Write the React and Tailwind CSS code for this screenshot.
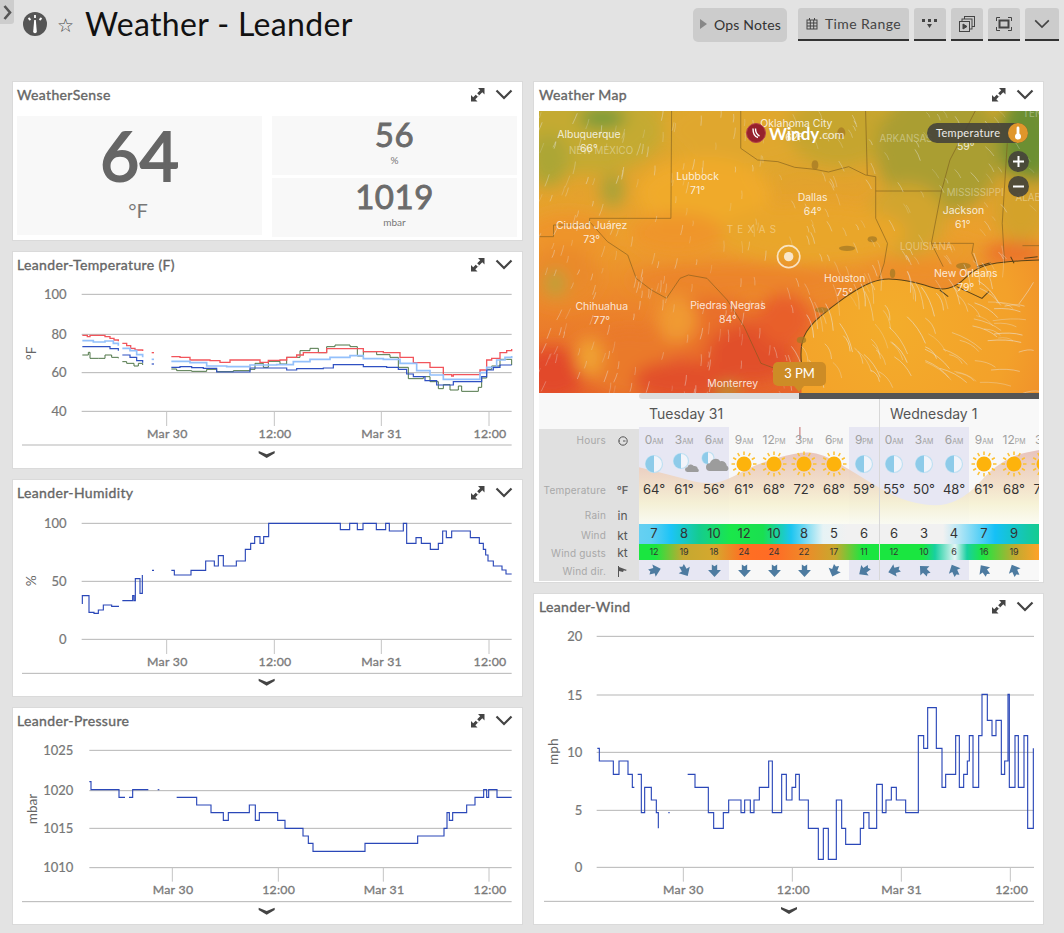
import React from "react";

const parse = (s, dx = 0) => {
  const n = s.trim().split(/[\s,]+/).map(Number);
  const out = [];
  for (let i = 0; i < n.length; i += 2) out.push([n[i] + dx, n[i + 1]]);
  return out;
};

// step line: go across to x, then up or down to y
const stepPath = (pts) => {
  let d = `M${pts[0][0]} ${pts[0][1]}`;
  for (const [x, y] of pts.slice(1)) d += `H${x}V${y}`;
  return d;
};

const smoothPath = (pts) => {
  let d = `M${pts[0][0]} ${pts[0][1]}`;
  for (let i = 1; i < pts.length - 1; i++) {
    const mx = (pts[i][0] + pts[i + 1][0]) / 2;
    const my = (pts[i][1] + pts[i + 1][1]) / 2;
    d += `Q${pts[i][0]} ${pts[i][1]} ${mx} ${my}`;
  }
  const last = pts[pts.length - 1];
  return d + `L${last[0]} ${last[1]}`;
};

const BLUE = "#2a47b8";

const charts = {
  temp: {
    vb: "9 0 1527 564",
    left: 215, right: 1505, grid: [43, 163, 278, 394],
    yLabels: ["100", "80", "60", "40"], labelEnd: 170,
    ticks: [470, 793, 1114, 1437], tickBottom: 438, tickText: [472, 795, 1115, 1440], tickY: 474,
    bottom: 495, chevron: 522, chevX: 770, axisLeft: 36, unit: "°F", unitX: 78, unitY: 220,
    series: [
      { c: "#4f7547", w: 3, parts: ["217 225 235 217 240 235 265 235 285 225 305 232 325 235", "337 245 350 250 372 258 385 250 398 255", "484 267 500 272 545 274 590 268 620 275 670 272 720 268 735 250 760 262 775 244 810 252 830 232 870 212 900 205 925 218 950 200 975 195 1020 200 1042 228 1060 215 1100 224 1140 232 1165 262 1185 262 1195 296 1240 290 1260 305 1285 326 1300 314 1320 330 1345 318 1355 334 1405 322 1415 294 1430 268 1445 258 1470 238 1490 238 1505 255"] },
      { c: "#f2555c", w: 4, parts: ["217 166 232 170 240 166 285 170 300 175 312 180 325 184", "337 190 350 197 362 205 375 210 398 213", "425 218 432 218", "484 230 510 232 540 240 600 242 630 247 660 240 720 240 750 247 775 241 810 240 830 232 860 225 880 218 925 218 950 206 1040 206 1060 215 1120 218 1170 232 1210 248 1260 262 1300 284 1325 288 1330 284 1395 284 1410 270 1430 240 1445 235 1470 218 1490 212 1505 207"] },
      { c: "#93c0fb", w: 5, parts: ["217 182 250 186 285 183 310 190 325 197", "337 205 360 212 380 224 398 232", "425 238 432 238", "484 244 540 248 590 258 650 260 720 255 800 254 850 245 900 238 960 232 1020 227 1060 236 1120 238 1170 250 1220 272 1260 285 1300 298 1380 298 1410 278 1430 262 1460 240 1485 232 1505 228"] },
      { c: "#2f50c2", w: 3.6, parts: ["217 200 270 200 300 206 325 212", "337 225 360 232 380 242 398 248", "425 252 432 252", "484 262 510 260 545 263 580 265 620 276 680 276 720 264 790 264 830 270 860 266 940 264 970 254 1030 254 1060 260 1130 262 1165 268 1190 282 1210 290 1245 302 1280 315 1330 305 1400 305 1415 290 1430 270 1450 262 1470 255 1505 255"] },
    ],
  },
  humidity: {
    vb: "9 84 1527 564",
    left: 215, right: 1505, grid: [130, 304, 478],
    yLabels: ["100", "50", "0"], labelEnd: 170,
    ticks: [470, 793, 1114, 1437], tickBottom: 522, tickText: [472, 795, 1115, 1440], tickY: 557,
    bottom: 580, chevron: 605, chevX: 770, axisLeft: 36, unit: "%", unitX: 78, unitY: 302,
    series: [
      { c: BLUE, w: 3.4, parts: ["217 372 217 347 237 397 252 400 265 390 280 375 305 379 327 379", "337 362 368 347 372 362 376 296 390 340 397 285", "426 271 432 271", "484 271 493 285 543 271 587 243 613 258 625 227 640 258 679 243 706 208 722 190 734 170 750 190 761 170 776 130 991 149 1019 130 1042 149 1059 130 1099 149 1127 130 1138 153 1180 130 1190 190 1218 173 1234 190 1261 208 1285 190 1298 153 1309 173 1325 153 1381 173 1408 190 1420 208 1427 225 1434 243 1450 258 1476 270 1488 282 1505 282"] },
    ],
  },
  pressure: {
    vb: "9 93 1527 564",
    left: 238, right: 1505, grid: [136, 257, 370, 488],
    yLabels: ["1025", "1020", "1015", "1010"], labelEnd: 190,
    ticks: [487, 805, 1120, 1437], tickBottom: 530, tickText: [489, 806, 1122, 1440], tickY: 567,
    bottom: 590, chevron: 617, chevX: 770, axisLeft: 36, unit: "mbar", unitX: 80, unitY: 312,
    series: [
      { c: BLUE, w: 3.4, parts: ["238 230 243 254 327 277 345 277", "357 277 368 254 415 254", "443 254 448 254", "500 277 560 300 603 323 640 346 655 323 718 300 736 346 748 323 803 346 825 370 879 393 895 415 909 439 1065 415 1223 393 1302 370 1311 323 1318 346 1328 323 1370 300 1395 277 1421 254 1430 277 1436 254 1461 277 1505 277"] },
    ],
  },
  wind: {
    vb: "12 81 1530 906",
    left: 200, right: 1512, grid: [124, 300, 472, 646, 817],
    yLabels: ["20", "15", "10", "5", "0"], labelEnd: 157,
    ticks: [460, 787, 1114, 1441], tickBottom: 860, tickText: [460, 790, 1115, 1445], tickY: 897,
    bottom: 919, chevron: 945, chevX: 777, axisLeft: 42, unit: "mph", unitX: 84, unitY: 470,
    series: [
      { c: BLUE, w: 3.4, parts: [
        "202 460 208 498 250 538 267 498 294 538 307 577 313 577",
        "323 538 334 653 344 577 364 615 379 653 385 700",
        "415 653 419 653",
        "473 538 495 577 535 653 551 700 580 653 596 615 633 653 644 615 661 653 672 615 688 577 716 498 727 653 755 538 769 615 786 577 797 538 808 615 835 700 865 793 880 700 895 793 919 615 935 700 947 748 991 700 1001 653 1017 700 1040 568 1057 653 1068 615 1084 577 1099 615 1127 653 1165 422 1181 460 1193 338 1219 460 1236 577 1247 538 1277 422 1288 577 1301 538 1312 498 1318 422 1329 577 1346 422 1356 298 1372 376 1386 422 1398 376 1414 538 1424 498 1434 298 1438 577 1455 422 1465 577 1482 422 1493 700 1510 460",
      ] },
    ],
  },
};

const Chevron = ({ w = 18, h = 11, sw = 2.2, c = "#444" }) => (
  <svg width={w} height={h} viewBox="0 0 18 11" fill="none">
    <path d="M1.5 1.5 9 9l7.5-7.5" stroke={c} strokeWidth={sw} />
  </svg>
);

const ExpandIcon = () => (
  <svg width="15" height="15" viewBox="0 0 15 15" fill="#444">
    <path d="M8 1h6.5v6.5l-2.2-2.2L5.3 12.3l2.2 2.2H1V8l2.2 2.2 7-7z" />
    <path d="M6 6.5 8.500 9" stroke="#fff" strokeWidth="2" />
  </svg>
);

const Panel = ({ title, h, pad = "pl-[4px]", children }) => (
  <div className={`bg-white border border-[#dadada] w-[511px] flex flex-col ${h}`}>
    <div className={`h-[28px] shrink-0 flex items-center justify-between pb-[3px] pr-[9px] ${pad}`}>
      <span className="text-[14px] text-[#666] tracking-[0.35px] [-webkit-text-stroke:0.35px_#666]">{title}</span>
      <div className="flex items-center gap-[10px]">
        <ExpandIcon />
        <Chevron />
      </div>
    </div>
    {children}
  </div>
);

const Chart = ({ cfg }) => {
  const [, , vw, vh] = cfg.vb.split(" ").map(Number);
  return (
    <svg viewBox={cfg.vb} width={vw / 3} height={vh / 3} className="block" fontFamily="Lato, sans-serif">
      {cfg.grid.map((y, i) => (
        <g key={y}>
          <line x1={cfg.left} x2={cfg.right} y1={y} y2={y} stroke="#b5b5b5" strokeWidth="3" />
          <text x={cfg.labelEnd} y={y + 14} textAnchor="end" fontSize="39" fill="#777" stroke="#777" strokeWidth="0.6">{cfg.yLabels[i]}</text>
        </g>
      ))}
      {cfg.ticks.map((x, i) => (
        <g key={x}>
          <line x1={x} x2={x} y1={cfg.grid[cfg.grid.length - 1]} y2={cfg.tickBottom} stroke="#c4c4c4" strokeWidth="3" />
          <text x={cfg.tickText[i]} y={cfg.tickY} textAnchor="middle" fontSize="37" fill="#7a7a7a" stroke="#7a7a7a" strokeWidth="1" letterSpacing="0.8">
            {i % 2 === 0 ? (i === 0 ? "Mar 30" : "Mar 31") : "12:00"}
          </text>
        </g>
      ))}
      <text transform={`translate(${cfg.unitX} ${cfg.unitY}) rotate(-90)`} textAnchor="middle" fontSize="41" fill="#666">{cfg.unit}</text>
      {cfg.series.map((s) =>
        s.parts.map((p, i) => <path key={s.c + i} d={stepPath(parse(p))} fill="none" stroke={s.c} strokeWidth={s.w} />)
      )}
      <line x1={cfg.axisLeft} x2={cfg.right} y1={cfg.bottom} y2={cfg.bottom} stroke="#b5b5b5" strokeWidth="3" />
      <path d={`M${cfg.chevX - 24} ${cfg.chevron - 9}l24 10 24-10v7l-24 14-24-14z`} fill="#444" />
    </svg>
  );
};

// ---- map ----
const coast = parse("790 760 785 710 810 650 880 590 950 540 1010 510 1060 505 1140 520 1200 540 1250 530 1310 470 1390 455 1494 450");
const coastY = (x) => {
  for (let i = 0; i < coast.length - 1; i++) {
    const [x1, y1] = coast[i];
    const [x2, y2] = coast[i + 1];
    if (x >= Math.min(x1, x2) && x <= Math.max(x1, x2)) return y1 + ((x - x1) / (x2 - x1 || 1)) * (y2 - y1);
  }
  return 2000;
};

let seed = 7;
const rnd = () => {
  seed = (seed * 16807) % 2147483647;
  return seed / 2147483647;
};

const streaks = [];
for (let i = 0; i < 380; i++) {
  const x = 12 + rnd() * 1482;
  const y = 3 + rnd() * 846;
  const sea = x > 790 && y > coastY(x) + 8;
  let a, len;
  if (sea) {
    a = Math.atan2(y - 500, x - 1450) + Math.PI / 2;
    len = 40 + rnd() * 60;
  } else {
    a = ((90 + (300 - x) * 0.03 + (x > 700 ? -6 : 12) + rnd() * 14 - 7) * Math.PI) / 180;
    len = 14 + rnd() * 22;
  }
  const dx = Math.cos(a) * len;
  const dy = Math.sin(a) * len;
  const bend = sea ? 8 : 2;
  streaks.push({
    d: `M${x.toFixed(0)} ${y.toFixed(0)}q${(dx / 2 + bend).toFixed(0)} ${(dy / 2 - bend).toFixed(0)} ${dx.toFixed(0)} ${dy.toFixed(0)}`,
    o: sea ? 0.3 + rnd() * 0.35 : 0.2 + rnd() * 0.3,
  });
}

const blobs = [
  [150, 60, 230, 130, "#c4aa33"], [200, 24, 70, 30, "#6f9a3a"], [230, 240, 35, 50, "#a8a338"], [40, 150, 60, 80, "#aca636"],
  [620, 60, 240, 120, "#e0a72d"], [900, 60, 150, 110, "#c6a52e"], [1200, 120, 190, 190, "#aa9e30"], [1460, 90, 80, 150, "#6c8f31"],
  [1100, 330, 120, 110, "#d2a52d"], [1440, 300, 80, 100, "#d4a22c"], [500, 250, 200, 110, "#f0aa2c"],
  [820, 370, 280, 90, "#e9a62c"], [100, 380, 130, 70, "#ee942c"], [420, 370, 140, 60, "#ef952c"],
  [600, 510, 320, 45, "#ec842a"], [80, 500, 110, 90, "#ea8a2c"], [60, 520, 30, 40, "#b9a23a"],
  [520, 660, 170, 100, "#e96f2a"], [420, 630, 60, 70, "#f09a30"], [640, 730, 130, 90, "#e14f29"], [50, 790, 100, 80, "#e2482a"],
  [280, 760, 130, 100, "#ea7a2b"], [160, 740, 40, 60, "#f0a232"], [440, 810, 150, 60, "#e2502a"], [570, 845, 30, 20, "#a0a838"],
  [740, 630, 80, 80, "#e85e2a"], [1240, 420, 80, 30, "#ea9c2c"], [1420, 430, 90, 35, "#ec722a"], [1130, 480, 160, 25, "#ee8e2b"],
];

const places = [
  ["Albuquerque", 160, 72], ["66°", 160, 114], ["Lubbock", 482, 198], ["71°", 482, 240], ["Dallas", 823, 262], ["64°", 823, 303],
  ["Ciudad Juárez", 168, 345], ["73°", 168, 387], ["Chihuahua", 198, 588], ["77°", 198, 630], ["Piedras Negras", 572, 586], ["84°", 572, 627],
  ["Houston", 918, 505], ["75°", 918, 546], ["New Orleans", 1277, 489], ["79°", 1277, 531], ["Jackson", 1270, 300], ["61°", 1268, 342],
  ["Oklahoma City", 775, 40], ["62°", 768, 82], ["Monterrey", 586, 820], ["59°", 1277, 108],
];
const regions = [
  ["NEW MEXICO", 196, 122, 0], ["MISSISSIPPI", 1305, 248, 0], ["LOUISIANA", 1160, 410, 0], ["ARKANSAS", 1100, 86, 0], ["ALAB", 1462, 262, 0], ["TEN", 1475, 12, 0], ["TEXAS", 648, 360, 13],
];

const WeatherMap = () => (
  <div className="relative w-[500px] h-[282px] overflow-hidden">
    <svg viewBox="12 3 1482 846" preserveAspectRatio="none" width="500" height="282" className="block" fontFamily="Inter, sans-serif">
      <defs>
        <filter id="soft" x="-20%" y="-20%" width="140%" height="140%"><feGaussianBlur stdDeviation="24" /></filter>
        <clipPath id="frame"><rect x="12" y="3" width="1482" height="846" /></clipPath>
        <linearGradient id="land" x1="0" y1="0" x2="0" y2="1">
          <stop offset="0" stopColor="#d6a82d" />
          <stop offset="0.45" stopColor="#ec9f2d" />
          <stop offset="0.7" stopColor="#ec842b" />
          <stop offset="1" stopColor="#e6642a" />
        </linearGradient>
        <radialGradient id="gulf" gradientUnits="userSpaceOnUse" cx="1050" cy="640" r="520">
          <stop offset="0" stopColor="#f3ad2b" />
          <stop offset="0.7" stopColor="#f3a12a" />
          <stop offset="1" stopColor="#f08f2a" />
        </radialGradient>
      </defs>
      <g clipPath="url(#frame)">
        <rect x="12" y="3" width="1482" height="846" fill="url(#land)" />
        <g filter="url(#soft)">
          {blobs.map(([cx, cy, rx, ry, c], i) => <ellipse key={i} cx={cx} cy={cy} rx={rx} ry={ry} fill={c} />)}
        </g>
        <path d={`${smoothPath(coast)}L1494 849L790 849Z`} fill="url(#gulf)" />
        <g fill="none" stroke="#7a5a1e" strokeWidth="2.2" opacity="0.8">
          <path d="M405 3 403 325H162V345H55V380H12" />
          <path d="M610 3V115L660 150 720 155 770 172 830 178 870 186 930 170 980 195 1010 200V325L1045 400 1035 460 1020 505" />
          <path d="M980 3 985 195M1010 243H1205L1230 150 1305 3M1205 243 1175 400H1300L1295 430 1310 465M1400 100 1385 340 1392 460M1175 400 1210 470M1445 407H1494" />
          <path d="M162 335 215 395 275 435 300 505 345 540 390 565 430 505 455 495 510 505 570 570 620 650 670 760 710 775 770 790" />
        </g>
        <path d={smoothPath(coast)} fill="none" stroke="#5a4318" strokeWidth="3" />
        <path d="M1200 540 1225 560M1250 530 1325 565 1345 545M1310 470 1350 458M1410 440 1420 460M1450 445 1490 440" fill="none" stroke="#5a4318" strokeWidth="3" />
        <g fill="#a67a24" opacity="0.75">
          <ellipse cx="830" cy="165" rx="10" ry="14" /><ellipse cx="908" cy="68" rx="12" ry="16" /><ellipse cx="925" cy="415" rx="24" ry="8" />
          <ellipse cx="1000" cy="388" rx="14" ry="9" /><ellipse cx="1060" cy="490" rx="8" ry="14" /><ellipse cx="1270" cy="468" rx="22" ry="10" />
          <ellipse cx="790" cy="690" rx="14" ry="10" /><ellipse cx="850" cy="600" rx="20" ry="8" />
        </g>
        <g fill="none" stroke="#e8e8e8" strokeWidth="2.6" strokeLinecap="round">
          {streaks.map((s, i) => <path key={i} d={s.d} opacity={s.o} />)}
        </g>
        <circle cx="752" cy="440" r="33" fill="none" stroke="#fbeedb" strokeOpacity="0.85" strokeWidth="5" />
        <circle cx="752" cy="440" r="14" fill="#fbeedb" fillOpacity="0.9" />
        {regions.map(([t, x, y, sp]) => (
          <text key={t} x={x} y={y + 10} textAnchor="middle" fontSize="29" letterSpacing={sp} fill="#fff" fillOpacity="0.36">{t}</text>
        ))}
        {places.map(([t, x, y]) => (
          <text key={t + x} x={x} y={y + 11} textAnchor="middle" fontSize="31" fill="#fff" fillOpacity="0.82">{t}</text>
        ))}
      </g>
    </svg>
    <div className="absolute left-[207px] top-[12px] flex items-center gap-[3px]">
      <div className="w-[20px] h-[20px] rounded-full bg-[#96202c] border border-[#b5404a] flex items-center justify-center">
        <svg width="12" height="12" viewBox="0 0 12 12" fill="none" stroke="#fff" strokeWidth="1.4"><path d="M3 1.5c0 5 1 8 5 9M5.500 1.500c0 4 1 6 4 7.500" /></svg>
      </div>
      <span className="text-white text-[17px] font-bold leading-none">Windy</span>
      <span className="text-white/80 text-[12px] leading-none -ml-[3px] mt-[3px]">.com</span>
    </div>
    <div className="absolute left-[388px] top-[12px] w-[101px] h-[20px] rounded-full bg-[#45423a]/90 flex items-center justify-between pl-[9px]">
      <span className="text-white/90 text-[11px] tracking-[0.3px]">Temperature</span>
      <div className="w-[20px] h-[20px] rounded-full bg-[#e0962b] flex items-center justify-center">
        <svg width="8" height="14" viewBox="0 0 8 14" fill="#fff"><rect x="2.6" y="0.5" width="2.8" height="9" rx="1.4" /><circle cx="4" cy="10.5" r="3" /></svg>
      </div>
    </div>
    <div className="absolute left-[469px] top-[40px] w-[21px] h-[21px] rounded-full bg-[#45423a]/90 flex items-center justify-center">
      <svg width="11" height="11" viewBox="0 0 11 11" stroke="#fff" strokeWidth="2"><path d="M5.500 0v11M0 5.500h11" /></svg>
    </div>
    <div className="absolute left-[469px] top-[65px] w-[21px] h-[21px] rounded-full bg-[#45423a]/90 flex items-center justify-center">
      <svg width="11" height="11" viewBox="0 0 11 11" stroke="#fff" strokeWidth="2"><path d="M0 5.500h11" /></svg>
    </div>
    <div className="absolute left-[234px] top-[251px] w-[53px] h-[24px] rounded-[5px] bg-[#cd8c26] text-white text-[13px] flex items-center justify-center">3 PM</div>
    <div className="absolute left-[255px] top-[275px] w-0 h-0 border-x-[5px] border-x-transparent border-t-[6px] border-t-[#cd8c26]" />
  </div>
);

// ---- forecast ----
const hours = [["0", "AM"], ["3", "AM"], ["6", "AM"], ["9", "AM"], ["12", "PM"], ["3", "PM"], ["6", "PM"], ["9", "PM"], ["0", "AM"], ["3", "AM"], ["6", "AM"], ["9", "AM"], ["12", "PM"], ["3", "PM"]];
const icons = ["moon", "moonCloud", "cloud", "sun", "sun", "sun", "sun", "moon", "moon", "moon", "moon", "sun", "sun", "sun"];
const temps = [64, 61, 56, 61, 68, 72, 68, 59, 55, 50, 48, 61, 68, 72];
const winds = [7, 8, 10, 12, 10, 8, 5, 6, 6, 3, 4, 7, 9, ""];
const gusts = [12, 19, 18, 24, 24, 22, 17, 11, 12, 10, 6, 16, 19, ""];
const dirs = [75, 150, 180, 180, 180, 180, 200, 235, 255, 315, 335, 325, 335, 330];

const Sun = () => (
  <svg width="26" height="26" viewBox="0 0 26 26">
    {Array.from({ length: 12 }, (_, i) => (
      <line key={i} x1="13" y1="0.500" x2="13" y2="4" stroke="#fcc02e" strokeWidth="1.500" transform={`rotate(${i * 30} 13 13)`} />
    ))}
    <circle cx="13" cy="13" r="7.500" fill="#fdb30c" />
  </svg>
);

const Moon = ({ cx = 13, cy = 13, r = 8.500 }) => (
  <>
    <circle cx={cx} cy={cy} r={r} fill="#f2f4fa" stroke="#bfe0f2" strokeWidth="1.200" />
    <path d={`M${cx} ${cy - r}a${r} ${r} 0 0 0 0 ${r * 2}z`} fill="#8ecbe9" />
  </>
);

const Cloud = ({ x, y, s }) => (
  <path transform={`translate(${x} ${y}) scale(${s})`} d="M3 10a3 3 0 0 1 0-6 4.500 4.500 0 0 1 8-1.500A4 4 0 0 1 16 6a2.200 2.200 0 0 1 0 4z" fill="#9c9c9c" />
);

const WeatherIcon = ({ type }) => {
  if (type === "sun") return <Sun />;
  return (
    <svg width="26" height="26" viewBox="0 0 26 26" className="overflow-visible">
      {type === "moon" && <Moon />}
      {type === "moonCloud" && (<><Moon cx={10} cy={10} r={7.500} /><Cloud x={14} y={13} s={0.8} /></>)}
      {type === "cloud" && (<><Moon cx={7} cy={7} r={6} /><Cloud x={5} y={7} s={1.300} /></>)}
    </svg>
  );
};

const WindArrow = ({ deg }) => (
  <svg width="15" height="15" viewBox="0 0 14 14">
    <path transform={`rotate(${deg} 7 7)`} d="M7 1 13 7.500 9.500 7.500 9.500 12.500 7 11 4.500 12.500 4.500 7.500 1 7.500z" fill="#4d7ba0" />
  </svg>
);

const Cells = ({ items, className, render }) => (
  <div className={`relative flex ${className}`}>
    {items.map((v, i) => (
      <div key={i} className="w-[30px] shrink-0 flex items-center justify-center">{render ? render(v) : v}</div>
    ))}
  </div>
);

const tempCurve = parse("308 232 400 255 510 285 570 270 650 225 780 185 850 190 950 250 1021 295 1100 335 1210 352 1290 310 1350 240 1420 195 1494 180");

const LabelRow = ({ label, unit, h }) => (
  <div className={`flex items-center ${h}`}>
    <span className="w-[67px] text-right text-[10px] text-[#a8a8a8] tracking-[0.2px]">{label}</span>
    <span className="flex-1 flex justify-center text-[12px] text-[#555]">{unit}</span>
  </div>
);

const Forecast = () => (
  <div className="flex h-[182px] bg-[#f8f8f8] font-['Inter',sans-serif]">
    <div className="w-[100px] mt-[30px] bg-[#e0e0e0] shrink-0">
      <LabelRow h="h-[23px]" label="Hours" unit={
        <svg width="10" height="10" viewBox="0 0 10 10" fill="none" stroke="#555"><circle cx="5" cy="5" r="4.200" /><path d="M5 5h2.500M1 5h1" /></svg>
      } />
      <div className="h-[24px]" />
      <LabelRow h="h-[29px]" label="Temperature" unit={<b className="font-semibold text-[11px] text-[#666]">°F</b>} />
      <LabelRow h="h-[21px]" label="Rain" unit="in" />
      <LabelRow h="h-[19px]" label="Wind" unit="kt" />
      <LabelRow h="h-[16px]" label="Wind gusts" unit="kt" />
      <LabelRow h="h-[20px]" label="Wind dir." unit={
        <svg width="11" height="11" viewBox="0 0 11 11" fill="#555"><path d="M1.500 0v11" stroke="#555" /><path d="M2 1l8 3-2 1-1-1-1 2-4-1z" /></svg>
      } />
    </div>
    <div className="relative flex-1 overflow-hidden">
      <div className="flex h-[28px] items-center text-[14px] text-[#555]">
        <span className="w-[240px] pl-[10px] shrink-0">Tuesday 31</span>
        <span className="pl-[11px]">Wednesday 1</span>
      </div>
      <div className="relative">
        <div className="absolute left-0 top-0 w-[90px] h-[153px] bg-[#e7e7f3]" />
        <div className="absolute left-[210px] top-0 w-[120px] h-[153px] bg-[#e7e7f3]" />
        <svg viewBox="308 111 1186 291" preserveAspectRatio="none" width="400" height="97" className="absolute left-0 top-0">
          <defs>
            <linearGradient id="tempFill" gradientUnits="userSpaceOnUse" x1="0" y1="180" x2="0" y2="402">
              <stop offset="0" stopColor="#e6bdb6" />
              <stop offset="0.45" stopColor="#f1dcc4" />
              <stop offset="0.72" stopColor="#f6f1d2" />
              <stop offset="1" stopColor="#fbfcf2" />
            </linearGradient>
          </defs>
          <path d={`${smoothPath(tempCurve)}V402H308Z`} fill="url(#tempFill)" opacity="0.9" />
          <line x1="785" x2="785" y1="111" y2="148" stroke="#cf8f8f" strokeWidth="4" />
        </svg>
        <Cells items={hours} className="h-[25px]" render={([n, s]) => (
          <span className="text-[12px] text-[#a0a0a0]">{n}<span className="text-[7px]">{s}</span></span>
        )} />
        <Cells items={icons} className="h-[24px]" render={(t) => <WeatherIcon type={t} />} />
        <Cells items={temps} className="h-[28px] text-[13px] text-[#333]" render={(t) => `${t}°`} />
        <div className="h-[20px]" />
        <Cells items={winds} className="h-[20px] text-[13px] text-[#333] bg-[linear-gradient(90deg,#66d0f2_0%,#5fcff2_3%,#1cc4f6_8%,#14cc90_15%,#1ae74a_23%,#1adf50_31%,#1cc5f0_38%,#e6f3f5_46%,#f1f1f1_52%,#f1f1f1_76%,#b5e6f5_80%,#15c0f6_89%,#15c8a8_97%,#15cc90_100%)]" />
        <Cells items={gusts} className="h-[16px] text-[9px] text-[#333] bg-[linear-gradient(90deg,#1ae640_0%,#1ae640_4%,#c4a830_11%,#d6a82e_19%,#ff6f22_26%,#ff6b25_34%,#f08828_41%,#c8a82e_49%,#1ae640_56%,#1ae640_64%,#1ae640_71%,#18d0a0_74%,#e6f4f5_79%,#18d0a0_82%,#1ee640_86%,#c0aa30_94%,#ffa228_100%)]" />
        <Cells items={dirs} className="h-[20px]" render={(d) => <WindArrow deg={d} />} />
        <div className="h-px bg-[#ddd]" />
      </div>
      <div className="absolute left-[240px] top-0 h-[181px] w-px bg-[#d8d8d8]" />
    </div>
  </div>
);

const Stat = ({ value, unit }) => (
  <div className="flex-1 bg-[#f8f8f8] flex flex-col items-center justify-center pb-[7px]">
    <span className="text-[33px] leading-[37px] text-[#6b6b6b] tracking-[0.5px] [-webkit-text-stroke:0.9px_#6b6b6b]">{value}</span>
    <span className="text-[10px] leading-[15px] text-[#777]">{unit}</span>
  </div>
);

const ToolBtn = ({ w, children }) => (
  <div className={`${w} h-[33px] bg-[#cccccc] border-b-2 border-[#333] rounded-t-[3px] flex items-center justify-center`}>{children}</div>
);

export default function App() {
  return (
    <div className="relative w-[1064px] min-h-[933px] bg-[#e3e3e3] font-['Lato',sans-serif]">
      <div className="absolute left-0 top-0 w-[14px] h-[24px] bg-[#cdcdcd] rounded-br-[3px] flex items-center justify-center">
        <svg width="9" height="15" viewBox="0 0 9 15" fill="none"><path d="M1.500 1 7 7.500 1.500 14" stroke="#555" strokeWidth="2.600" /></svg>
      </div>
      <header className="h-[81px] flex justify-between pl-[23px] pr-[5px]">
        <div className="flex items-start pt-[4px]">
          <svg width="24" height="24" viewBox="0 0 24 24" className="mt-[8px]">
            <circle cx="12" cy="12" r="12" fill="#555" />
            <path d="M11.200 8h1.600l1 11.500a1.800 1.800 0 0 1-3.600 0z" fill="#fff" />
            <path d="M12 3v3M5.500 6l2 2M18.500 6l-2 2" stroke="#fff" strokeWidth="1.800" />
          </svg>
          <span className="ml-[10px] mt-[7px] text-[19px] leading-[28px] text-[#444] font-['DejaVu_Sans',sans-serif]">☆</span>
          <h1 className="ml-[11px] text-[32px] leading-[40px] text-[#111] tracking-[0.35px]">Weather - Leander</h1>
        </div>
        <div className="flex items-start pt-[8px]">
          <div className="w-[94px] h-[34px] mr-[11px] pb-[2px] bg-[#cccccc] rounded-[5px] flex items-center text-[14px] text-[#333] pl-[7px] tracking-[0.2px]">
            <span className="w-0 h-0 border-y-[5px] border-y-transparent border-l-[7px] border-l-[#888] mr-[7px]" />
            Ops Notes
          </div>
          <ToolBtn w="w-[111px]">
            <svg width="12" height="12" viewBox="0 0 12 12" fill="none" stroke="#444" className="mr-[7px]"><rect x="1" y="2" width="10" height="9" /><path d="M1 5h10M1 8h10M4.300 2v9M7.700 2v9M3.500 0v2M8.500 0v2" /></svg>
            <span className="text-[14px] text-[#444] tracking-[0.4px]">Time Range</span>
          </ToolBtn>
          <div className="flex gap-[5px] ml-[5px]">
            <ToolBtn w="w-[32px]">
              <svg width="16" height="11" viewBox="0 0 16 11" fill="#444"><rect x="0" y="1" width="3" height="3" /><rect x="6" y="1" width="3" height="3" /><rect x="12" y="1" width="3" height="3" /><path d="M5 6h5l-2.500 4z" /></svg>
            </ToolBtn>
            <ToolBtn w="w-[32px]">
              <svg width="16" height="16" viewBox="0 0 16 16" fill="none" stroke="#444"><rect x="5.500" y="0.500" width="10" height="10" /><rect x="3" y="3" width="10" height="10" fill="#ccc" /><rect x="0.500" y="5.500" width="10" height="10" fill="#ccc" /><path d="M4 8v5l4-2.500z" fill="#444" /></svg>
            </ToolBtn>
            <ToolBtn w="w-[32px]">
              <svg width="16" height="14" viewBox="0 0 16 14" fill="none" stroke="#444"><path d="M.5 4V.5H4M12 .5h3.500V4M15.500 10v3.500H12M4 13.500H.5V10" /><rect x="3.500" y="3.500" width="9" height="7" strokeWidth="2" /></svg>
            </ToolBtn>
            <ToolBtn w="w-[34px]"><Chevron w={18} h={10} sw={1.800} /></ToolBtn>
          </div>
        </div>
      </header>

      <main className="flex gap-[10px] pl-[12px]">
        <div className="flex flex-col gap-[10px]">
          <Panel title="WeatherSense" h="h-[160px]">
            <div className="flex gap-[10px] px-[4px] pt-[6px]">
              <div className="w-[245px] h-[119px] bg-[#f8f8f8] flex flex-col items-center">
                <span className="text-[68px] leading-[78px] text-[#666] [-webkit-text-stroke:2px_#666]">64</span>
                <span className="text-[20px] leading-[24px] mt-[4px] -ml-[3px] text-[#777]">°F</span>
              </div>
              <div className="w-[245px] h-[119px] flex flex-col gap-[3px]">
                <Stat value="56" unit="%" />
                <Stat value="1019" unit="mbar" />
              </div>
            </div>
          </Panel>
          <Panel title="Leander-Temperature (F)" h="h-[218px]"><Chart cfg={charts.temp} /></Panel>
          <Panel title="Leander-Humidity" h="h-[218px]"><Chart cfg={charts.humidity} /></Panel>
          <Panel title="Leander-Pressure" h="h-[218px]"><Chart cfg={charts.pressure} /></Panel>
        </div>
        <div className="flex flex-col gap-[10px]">
          <Panel title="Weather Map" h="h-[502px]" pad="pl-[5px]">
            <div className="pl-[5px] w-[505px] mt-px">
              <WeatherMap />
              <div className="flex h-[6px] bg-[#f8f8f8]">
                <div className="w-[100px]" />
                <div className="w-[160px] bg-[#dddddd] rounded-l-[3px]" />
                <div className="flex-1 bg-[#555555]" />
              </div>
              <Forecast />
            </div>
          </Panel>
          <Panel title="Leander-Wind" h="h-[332px]" pad="pl-[5px]"><Chart cfg={charts.wind} /></Panel>
        </div>
      </main>
    </div>
  );
}
